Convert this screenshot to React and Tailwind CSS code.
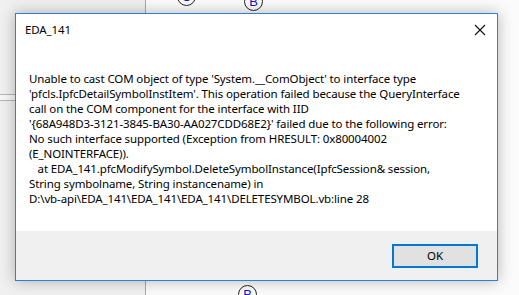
import React from "react";

function CircleLabel({ letter, className }) {
  return (
    <div
      className={
        "absolute w-[19px] h-[19px] rounded-full border border-[#222] flex items-center justify-center text-[13px] leading-none text-[#1515c8] " +
        className
      }
      style={{ fontFamily: "'Liberation Sans', Arial, sans-serif" }}
    >
      {letter}
    </div>
  );
}

export default function App() {
  const lines = [
    "Unable to cast COM object of type 'System.__ComObject' to interface type",
    "'pfcls.IpfcDetailSymbolInstItem'. This operation failed because the QueryInterface",
    "call on the COM component for the interface with IID",
    "'{68A948D3-3121-3845-BA30-AA027CDD68E2}' failed due to the following error:",
    "No such interface supported (Exception from HRESULT: 0x80004002",
    "(E_NOINTERFACE)).",
    "\u00a0\u00a0\u00a0at EDA_141.pfcModifySymbol.DeleteSymbolInstance(IpfcSession& session,",
    "String symbolname, String instancename) in",
    "D:\\vb-api\\EDA_141\\EDA_141\\EDA_141\\DELETESYMBOL.vb:line 28",
  ];
  return (
    <div
      className="relative w-[519px] h-[295px] overflow-hidden flex"
      style={{ fontFamily: "'Noto Sans', 'Open Sans', sans-serif" }}
    >
      <div className="w-[146px] h-full bg-[#f0f0f0] border-r border-[#a8a8a8] flex flex-col">
        <div className="h-[94px]" />
        <div className="h-[7px] border-t border-b border-[#b5b5b5] bg-[#f7f7f7]" />
      </div>
      <div className="flex-1 h-full bg-[#fbfbfb] relative">
        <CircleLabel letter="C" className="left-[31px] -top-[13px]" />
        <CircleLabel letter="B" className="left-[98px] -top-[8px]" />
        <CircleLabel letter="B" className="left-[92px] top-[285px]" />
      </div>

      <div className="absolute left-[15px] top-[13px] w-[483px] h-[268px] border border-[#2a82d4] bg-white flex flex-col shadow-[0_0_14px_rgba(0,0,0,0.28)]">
        <div className="flex-1 bg-white flex flex-col">
          <div className="h-[31px] flex items-center justify-between pl-[9px] pr-[8px] pt-[1px]">
            <span className="text-[11.5px] tracking-[-0.1px] text-black">EDA_141</span>
            <svg width="12" height="12" viewBox="0 0 12 12" className="mr-[3px]">
              <path d="M1 1 L11 11 M11 1 L1 11" stroke="#111" strokeWidth="1.1" fill="none" />
            </svg>
          </div>
          <div className="pt-[26px] pl-[13px] text-[11.5px] tracking-[-0.12px] leading-[15px] text-black whitespace-pre">
            {lines.map((l, i) => (
              <div key={i}>{l}</div>
            ))}
          </div>
        </div>
        <div className="h-[49px] bg-[#f0f0f0] flex items-start justify-end pt-[13px] pr-[19px]">
          <button className="w-[86px] h-[24px] border-2 border-[#0078d7] bg-[#e1e1e1] text-[11.5px] text-black flex items-center justify-center">
            OK
          </button>
        </div>
      </div>
    </div>
  );
}
